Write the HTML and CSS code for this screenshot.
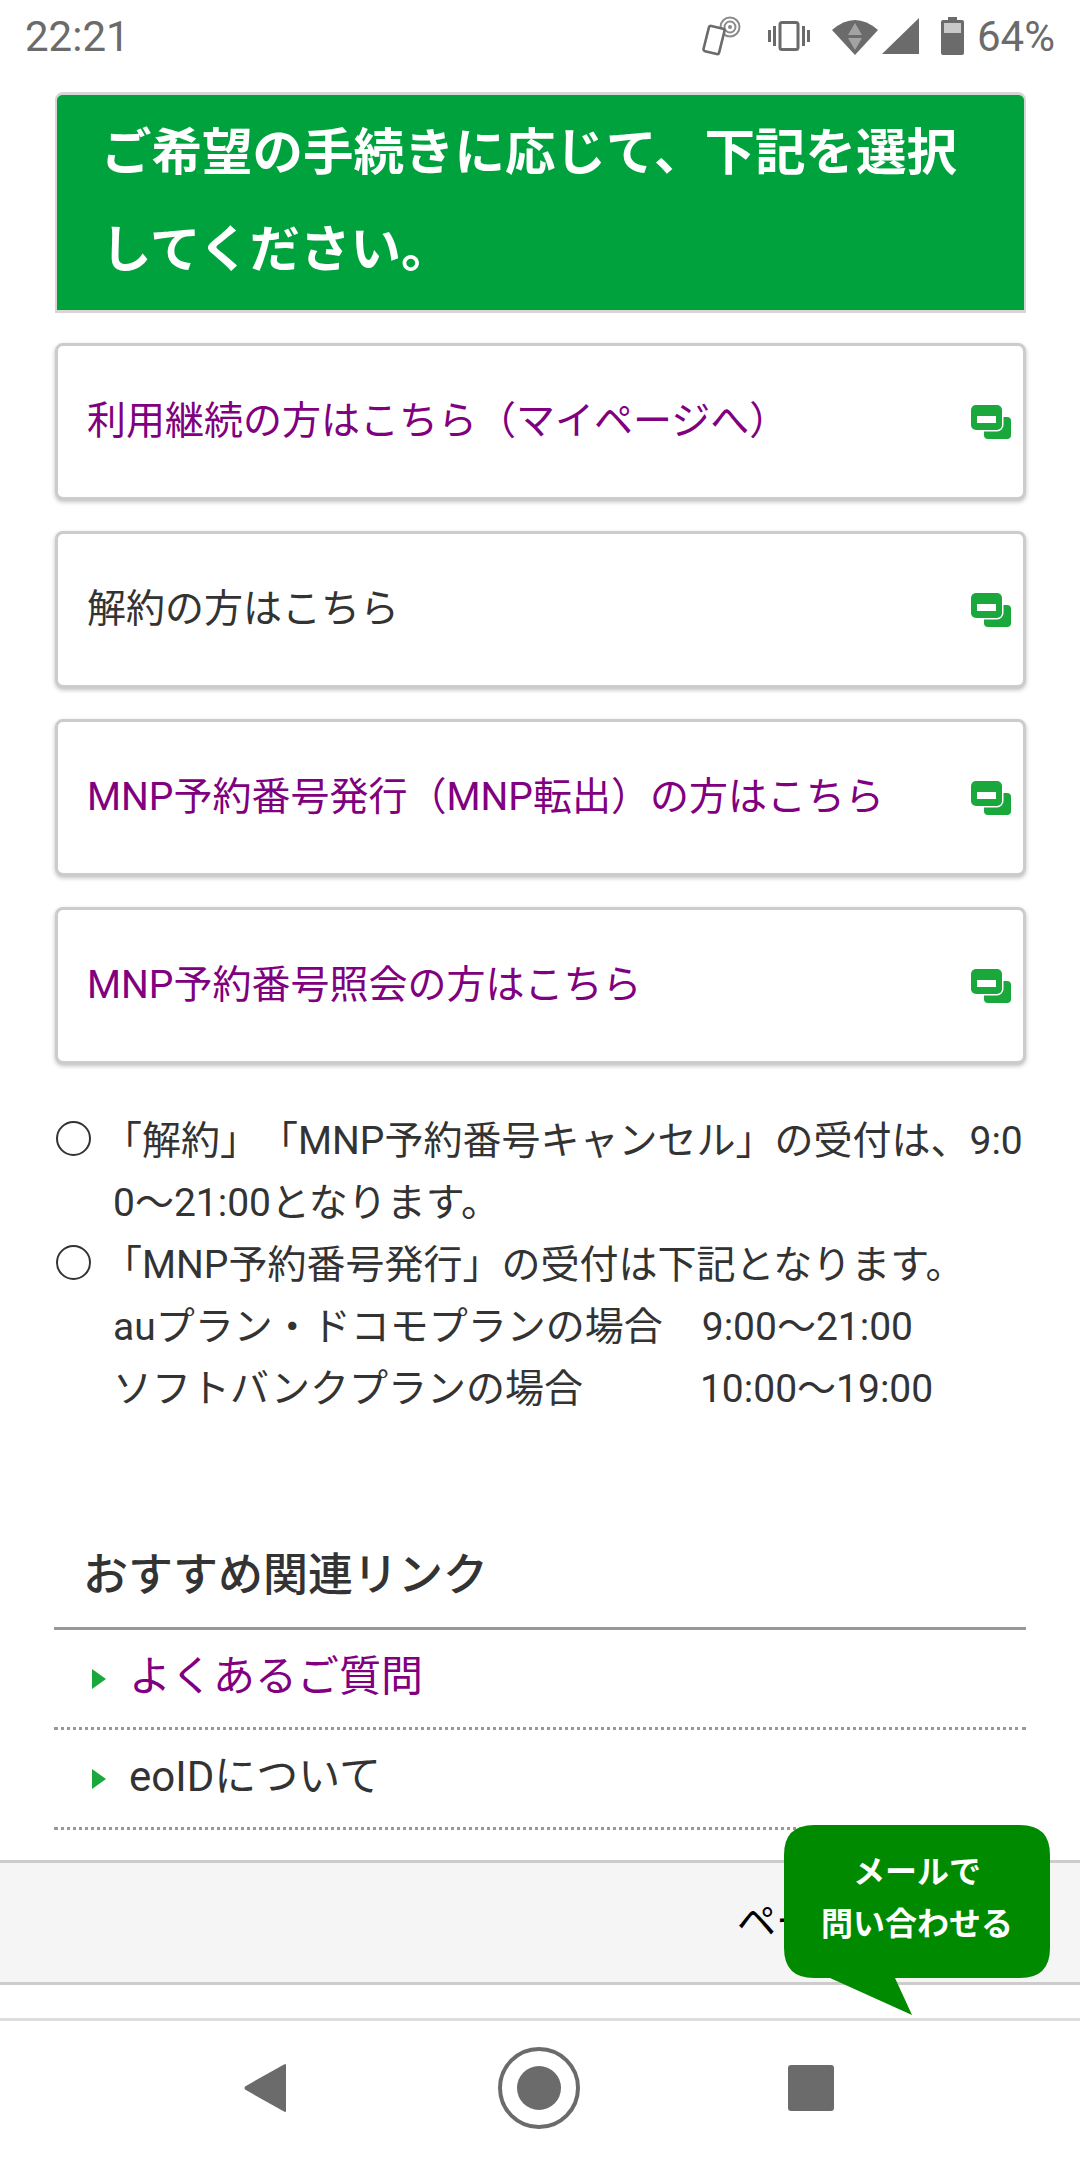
FILE: index.html
```html
<!DOCTYPE html>
<html lang="ja">
<head>
    <meta charset="UTF-8">
    <meta name="viewport" content="width=device-width, initial-scale=1.0">
    <title>手続きの選択</title>
    <link rel="stylesheet" href="styles.css">
</head>
<body>
    <!-- status bar -->
    <div class="statusbar">
        <span class="status-time">22:21</span>
        <div class="status-icons">
            <svg class="ic-nfc" width="42" height="40" viewBox="0 0 42 40"><g fill="none" stroke="#8a8a8a" stroke-width="2"><circle cx="30" cy="11" r="9.5"/><circle cx="30" cy="11" r="5.5"/></g><circle cx="30" cy="11" r="2" fill="#8a8a8a"/><rect x="6" y="11" width="16" height="26" rx="2" transform="rotate(14 14 24)" fill="#fff" stroke="#6b6b6b" stroke-width="2.6"/></svg>
            <svg class="ic-vib" width="42" height="30" viewBox="0 0 42 30"><rect x="12" y="1.5" width="18" height="27" rx="2" fill="none" stroke="#6b6b6b" stroke-width="3"/><path d="M0 9h3v12H0zM5 5h3v20H5zM34 5h3v20h-3zM39 9h3v12h-3z" fill="#6b6b6b"/></svg>
            <svg class="ic-wifi" width="46" height="37" viewBox="0 0 46 37"><path d="M0 12Q23-8 46 12L23 37z" fill="#6b6b6b"/><path d="M23 5l7 12H16zM16 20h14l-7 12z" fill="#a3a3a3"/></svg>
            <svg class="ic-signal" width="37" height="36" viewBox="0 0 37 36"><path d="M37 0v36H0z" fill="#6b6b6b"/></svg>
            <svg class="ic-batt" width="23" height="38" viewBox="0 0 23 38"><path d="M7 0h9v3h5a2 2 0 0 1 2 2v31a2 2 0 0 1-2 2H2a2 2 0 0 1-2-2V5a2 2 0 0 1 2-2h5z" fill="#6b6b6b"/><rect x="3" y="6" width="17" height="10" fill="#c9c9c9"/></svg>
            <span class="status-pct">64%</span>
        </div>
    </div>

    <div class="page">
        <div class="content">
            <h1 class="lead-box">ご希望の手続きに応じて、下記を選択してください。</h1>

            <!-- 手続きボタン -->
            <a class="proc-btn visited" href="#"><span class="btn-label">利用継続の方はこちら（マイページへ）</span><svg class="win-icon" viewBox="0 0 40 34"><use href="#win"/></svg></a>
            <a class="proc-btn" href="#"><span class="btn-label">解約の方はこちら</span><svg class="win-icon" viewBox="0 0 40 34"><use href="#win"/></svg></a>
            <a class="proc-btn visited" href="#"><span class="btn-label">MNP予約番号発行（MNP転出）の方はこちら</span><svg class="win-icon" viewBox="0 0 40 34"><use href="#win"/></svg></a>
            <a class="proc-btn visited" href="#"><span class="btn-label">MNP予約番号照会の方はこちら</span><svg class="win-icon" viewBox="0 0 40 34"><use href="#win"/></svg></a>

            <!-- 受付時間 -->
            <div class="notes">
                <div class="note">
                    <span class="note-mark"></span>
                    <p class="note-text">「解約」「MNP予約番号キャンセル」の受付は、9:00〜21:00となります。</p>
                </div>
                <div class="note">
                    <span class="note-mark"></span>
                    <p class="note-text">「MNP予約番号発行」の受付は下記となります。<br>auプラン・ドコモプランの場合　9:00〜21:00<br>ソフトバンクプランの場合　　　10:00〜19:00</p>
                </div>
            </div>

            <!-- 関連リンク -->
            <h2 class="links-title">おすすめ関連リンク</h2>
            <ul class="links">
                <li class="visited"><a href="#">よくあるご質問</a></li>
                <li><a href="#">eoIDについて</a></li>
            </ul>
        </div>

        <div class="pagetop"><span>ページトップへ</span></div>
    </div>

    <!-- floating mail button -->
    <a class="mail-float" href="#">
        <svg class="mail-bubble" width="266" height="190" viewBox="0 0 266 190"><path d="M30 0H236Q266 0 266 30V123Q266 153 236 153H111L128 190L46 153H30Q0 153 0 123V30Q0 0 30 0Z" fill="#008a00"/></svg>
        <span class="mail-text">メールで<br>問い合わせる</span>
    </a>

    <!-- nav bar -->
    <div class="navbar">
        <svg width="44" height="50" viewBox="0 0 44 50"><path d="M41 2v46L2 26q-1-1 0-2z" fill="#6b6b6b" stroke="#6b6b6b" stroke-width="2" stroke-linejoin="round"/></svg>
        <svg width="82" height="82" viewBox="0 0 82 82"><circle cx="41" cy="41" r="39" fill="none" stroke="#6b6b6b" stroke-width="4"/><circle cx="41" cy="41" r="22" fill="#6b6b6b"/></svg>
        <svg width="46" height="46" viewBox="0 0 46 46"><rect width="46" height="46" rx="3" fill="#6b6b6b"/></svg>
    </div>

    <svg width="0" height="0" class="defs"><defs><g id="win"><rect x="13" y="12" width="27" height="22" rx="4" fill="#1aa83c"/><rect x="0" y="0" width="31" height="25" rx="5" fill="#1aa83c" stroke="#fff" stroke-width="3" paint-order="stroke"/><rect x="6" y="11" width="19" height="7" fill="#fff"/></g></defs></svg>
</body>
</html>
```

FILE: styles.css
```css
* { margin: 0; padding: 0; box-sizing: border-box; }
html, body { height: 2160px; overflow: hidden; }
body { position: relative; background: #fff; color: #333; font-family: Roboto, 'Noto Sans CJK JP', sans-serif; font-size: 39px; text-spacing-trim: space-all; }
a { color: inherit; text-decoration: none; }
.defs { position: absolute; }

/* status bar */
.statusbar { height: 70px; padding: 2px 25px 0; display: flex; justify-content: space-between; align-items: center; color: #6b6b6b; font-size: 42px; }
.status-icons { display: flex; align-items: center; }
.ic-vib { margin-left: 26px; }
.ic-wifi { margin-left: 22px; }
.ic-signal { margin-left: 4px; }
.ic-batt { margin-left: 22px; }
.status-pct { margin-left: 13px; }

/* main */
.page { height: 1948px; overflow: hidden; }
.content { padding: 22px 54px 0 55px; }
.lead-box { height: 221px; padding: 9px 44px 0; background: #00a23e; border: 3px solid #d6d6d6; border-left-width: 2px; border-right-width: 2px; border-radius: 8px 8px 0 0; color: #fff; font-size: 50.5px; font-weight: 700; line-height: 97px; margin-bottom: 30px; }

/* buttons */
.proc-btn { display: flex; align-items: center; height: 157px; padding: 0 12px 0 29px; margin-bottom: 31px; background: #fff; border: 3px solid #ccc; border-radius: 8px; box-shadow: 0 2px 4px rgba(0,0,0,0.25); }
.btn-label { padding-bottom: 9px; }
.win-icon { width: 40px; height: 34px; margin-left: auto; flex: none; }
.visited { color: #800080; }

/* notes */
.notes { margin-top: 46px; }
.note { display: flex; align-items: flex-start; }
.note-mark { flex: none; width: 35px; height: 35px; margin: 11px 22px 0 1px; border: 2px solid #333; border-radius: 50%; background: #fff; }
.note-text { width: 915px; line-height: 62px; word-break: break-all; text-indent: -10px; }

/* related links */
.links-title { margin-top: 123px; padding-left: 29px; font-size: 45px; font-weight: 500; line-height: 66px; padding-bottom: 18px; margin-left: -1px; border-bottom: 3px solid #999; }
.links { list-style: none; margin-left: -1px; }
.links li { height: 100px; padding-left: 75px; border-bottom: 3px dotted #999; font-size: 42px; line-height: 94px; position: relative; }
.links li::before { content: ''; position: absolute; left: 38px; top: 39px; border-left: 14px solid #1aa83c; border-top: 10px solid transparent; border-bottom: 10px solid transparent; }

/* page top */
.pagetop { margin-top: 30px; height: 125px; padding-left: 737px; background: #f5f5f5; border-top: 3px solid #ccc; border-bottom: 3px solid #ccc; color: #000; line-height: 119px; white-space: nowrap; }

/* mail float */
.mail-float { position: absolute; left: 784px; top: 1825px; width: 266px; height: 190px; }
.mail-bubble { position: absolute; left: 0; top: 0; }
.mail-text { position: absolute; left: 0; top: 21px; width: 266px; text-align: center; color: #fff; font-size: 32px; font-weight: 700; line-height: 52px; }

/* nav bar */
.navbar { height: 142px; padding: 0 0 6px 244px; border-top: 3px solid #ddd; background: #fff; display: grid; grid-template-columns: 254px 290px 46px; align-items: center; }
```
